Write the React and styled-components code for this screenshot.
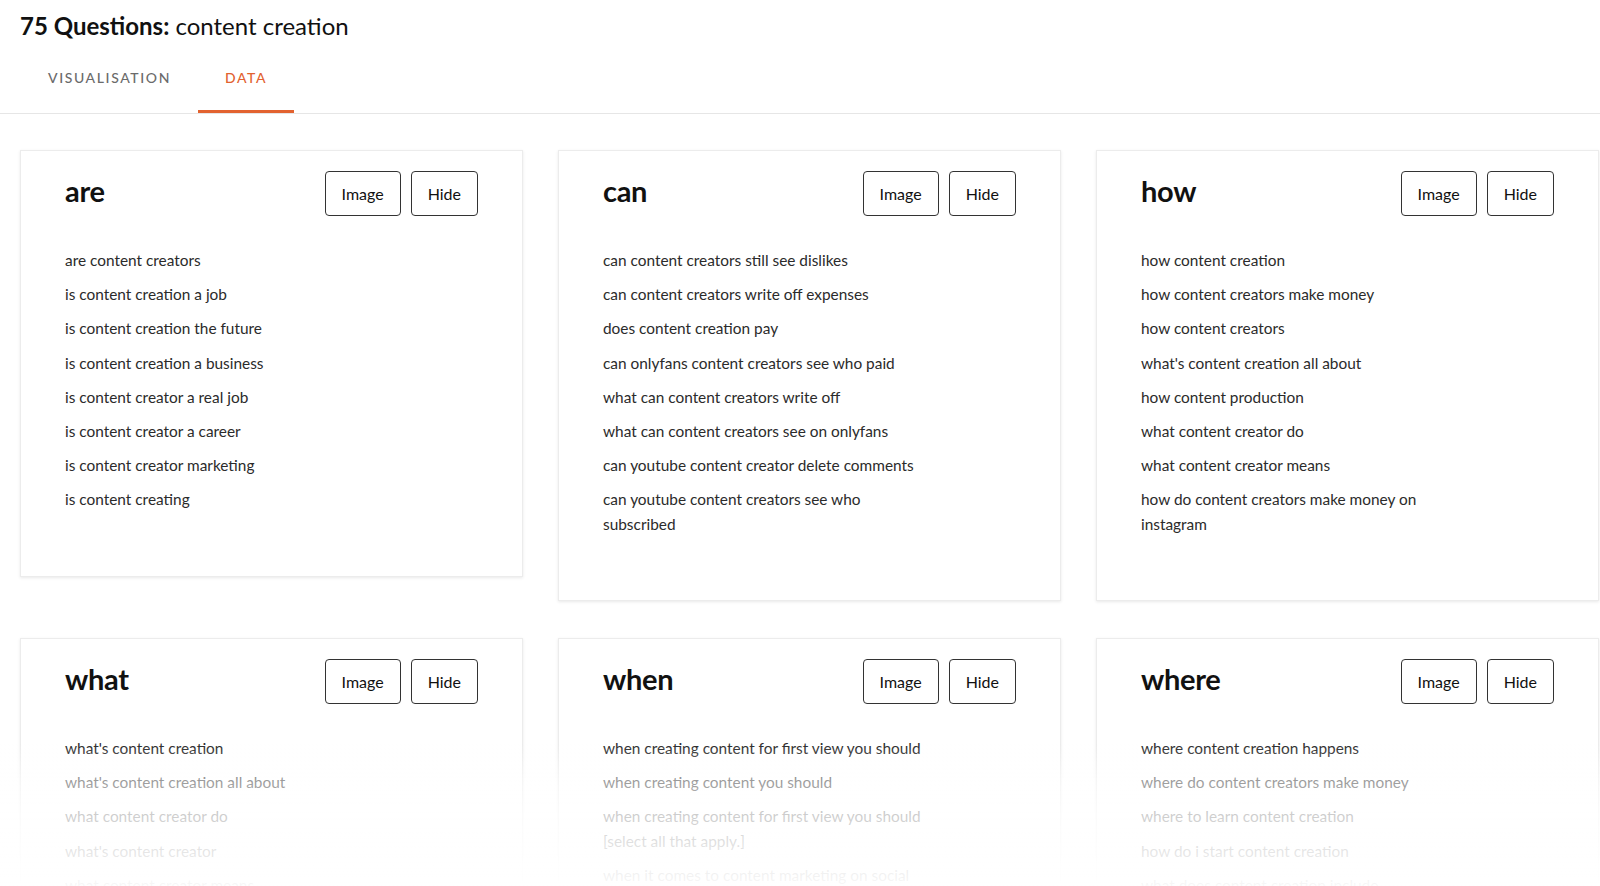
import styled, { createGlobalStyle } from "styled-components"

const GlobalStyle = createGlobalStyle`
    body {
        margin: 0;
        background: #fff;
        font-family: Lato, "Liberation Sans", sans-serif;
        color: #1d1d1d;
    }
`

const groups = [
    {
        title: "are",
        items: [
            "are content creators",
            "is content creation a job",
            "is content creation the future",
            "is content creation a business",
            "is content creator a real job",
            "is content creator a career",
            "is content creator marketing",
            "is content creating",
        ],
    },
    {
        title: "can",
        items: [
            "can content creators still see dislikes",
            "can content creators write off expenses",
            "does content creation pay",
            "can onlyfans content creators see who paid",
            "what can content creators write off",
            "what can content creators see on onlyfans",
            "can youtube content creator delete comments",
            "can youtube content creators see who subscribed",
        ],
    },
    {
        title: "how",
        items: [
            "how content creation",
            "how content creators make money",
            "how content creators",
            "what's content creation all about",
            "how content production",
            "what content creator do",
            "what content creator means",
            "how do content creators make money on instagram",
        ],
    },
    {
        title: "what",
        items: [
            "what's content creation",
            "what's content creation all about",
            "what content creator do",
            "what's content creator",
            "what content creator means",
            "what content creators do",
            "what is content creation",
        ],
    },
    {
        title: "when",
        items: [
            "when creating content for first view you should",
            "when creating content you should",
            "when creating content for first view you should [select all that apply.]",
            "when it comes to content marketing on social",
            "when did content creation start",
            "when to post content",
        ],
    },
    {
        title: "where",
        items: [
            "where content creation happens",
            "where do content creators make money",
            "where to learn content creation",
            "how do i start content creation",
            "what does content creation include",
            "where to start content creation",
        ],
    },
]

const App = () => {
    return (
        <>
            <GlobalStyle />
            <Header>
                <Title>
                    <strong>75 Questions:</strong> content creation
                </Title>
                <Tabs>
                    <Tab>Visualisation</Tab>
                    <Tab active>Data</Tab>
                </Tabs>
            </Header>
            <Grid>
                {groups.map((g) => (
                    <Card key={g.title}>
                        <CardHead>
                            <Heading>{g.title}</Heading>
                            <Actions>
                                <Button>Image</Button>
                                <Button>Hide</Button>
                            </Actions>
                        </CardHead>
                        <List>
                            {g.items.map((q) => (
                                <Item key={q}>{q}</Item>
                            ))}
                        </List>
                    </Card>
                ))}
            </Grid>
            <Fade />
        </>
    )
}

const Header = styled.header`
    padding-top: 10px;
    border-bottom: 1px solid #e6e6e6;
`
const Title = styled.h1`
    margin: 0 0 10px 20px;
    font-size: 24px;
    line-height: 32px;
    font-weight: 400;
    color: #111;
    strong {
        font-weight: 700;
    }
`
const Tabs = styled.nav`
    display: flex;
    padding-left: 21px;
`
const Tab = styled.div`
    padding: 16px 27px 22px;
    font-size: 14px;
    line-height: 20px;
    font-weight: 500;
    letter-spacing: 1.6px;
    text-transform: uppercase;
    color: ${(p) => (p.active ? "#e2622f" : "#6b6b6b")};
    border-bottom: 3px solid ${(p) => (p.active ? "#e2622f" : "transparent")};
`
const Grid = styled.main`
    display: grid;
    grid-template-columns: repeat(3, 503px);
    column-gap: 35px;
    row-gap: 37px;
    align-items: start;
    padding: 36px 0 40px 20px;
`
const Card = styled.section`
    background: #fff;
    border: 1px solid #ececec;
    box-shadow: 0 1px 3px rgba(0, 0, 0, 0.09);
    padding: 20px 44px 54px;
`
const CardHead = styled.div`
    display: flex;
    align-items: center;
    justify-content: space-between;
`
const Heading = styled.h2`
    margin: 0 0 6px;
    font-size: 29px;
    font-weight: 700;
    color: #111;
    letter-spacing: -0.3px;
`
const Actions = styled.div`
    display: flex;
    gap: 10px;
`
const Button = styled.button`
    height: 45px;
    padding: 0 16px;
    background: #fff;
    border: 1px solid #333;
    border-radius: 4px;
    font-family: inherit;
    font-size: 16px;
    color: #111;
    cursor: pointer;
`
const List = styled.ul`
    list-style: none;
    margin: 32px 0 0;
    padding: 0;
    max-width: 326px;
`
const Item = styled.li`
    font-size: 15.4px;
    line-height: 24.5px;
    margin-bottom: 9.7px;
    color: #2b2b2b;
`
const Fade = styled.div`
    position: fixed;
    left: 0;
    right: 0;
    bottom: 0;
    height: 142px;
    pointer-events: none;
    background: linear-gradient(
        to bottom,
        rgba(255, 255, 255, 0) 0%,
        rgba(255, 255, 255, 0.52) 25%,
        rgba(255, 255, 255, 0.77) 50%,
        rgba(255, 255, 255, 0.88) 75%,
        rgba(255, 255, 255, 0.97) 100%
    );
`

export default App
